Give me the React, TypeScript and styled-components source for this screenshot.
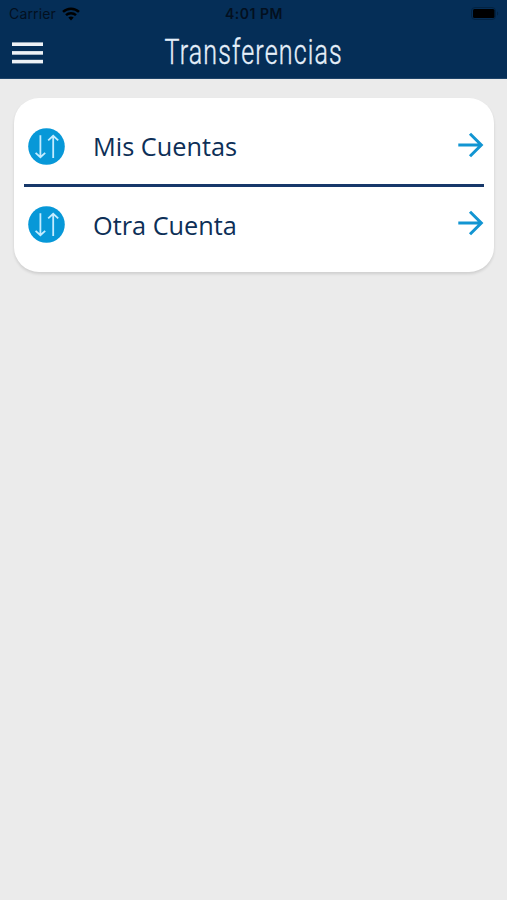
import React from "react";
import styled, { createGlobalStyle } from "styled-components";

const GlobalStyle = createGlobalStyle`
  * { box-sizing: border-box; }
  body { margin: 0; background: #ebebeb; }
`;

const Screen = styled.div`
  min-height: 900px;
  background: #ebebeb;
  font-family: "Open Sans", "Noto Sans", sans-serif;
`;

const Header = styled.header`
  height: 79px;
  background: #052e57;
  border-bottom: 1px solid #1f4469;
`;

const StatusBar = styled.div`
  height: 27px;
  padding: 0 8px 0 9px;
  display: grid;
  grid-template-columns: 1fr auto 1fr;
  align-items: center;
  color: #03101f;
  font: 400 14px/27px Inter, sans-serif;
`;

const Carrier = styled.div`
  display: flex;
  align-items: center;
  gap: 6px;
  letter-spacing: 0.15px;
`;

const Clock = styled.div`
  font-weight: 600;
  letter-spacing: 0.5px;
`;

const BatterySlot = styled.div`
  display: flex;
  justify-content: flex-end;
`;

const TitleBar = styled.div`
  height: 51px;
  display: grid;
  grid-template-columns: 43px 1fr 43px;
  align-items: center;
`;

const MenuButton = styled.button`
  border: 0;
  padding: 0 0 0 12px;
  background: none;
  display: flex;
`;

const Title = styled.h1`
  margin: 0;
  justify-self: center;
  color: #e6f0fa;
  font: 300 35px/51px Roboto, sans-serif;
  letter-spacing: 1.6px;
  white-space: nowrap;
  -webkit-text-stroke: 0.4px #e6f0fa;
  transform: scaleX(0.715);
`;

const Card = styled.main`
  margin: 19px 13px 0 14px;
  height: 174px;
  padding: 8px 10px 0;
  background: #fff;
  border-radius: 25px;
  box-shadow: 0 2px 3px rgba(0, 0, 0, 0.12);
`;

const Row = styled.div`
  height: 78px;
  padding: 2px 0 0 4px;
  display: flex;
  align-items: center;

  & + & {
    padding-top: 0;
    border-top: 3px solid #17386a;
  }
`;

const Label = styled.span`
  flex: 1;
  margin-left: 28px;
  color: #0d2f57;
  font-size: 25.3px;
  line-height: 34px;
  white-space: nowrap;
`;

const Arrow = styled.svg`
  margin-top: -3px;
`;

function MenuIcon() {
  return (
    <svg width="31" height="22" viewBox="0 0 31 22" fill="#eef2f6">
      <rect y="0.4" width="31" height="3.6" />
      <rect y="9.1" width="31" height="3.6" />
      <rect y="17.8" width="31" height="3.6" />
    </svg>
  );
}

function WifiIcon() {
  return (
    <svg width="18" height="14" viewBox="0 0 18 14" fill="none" stroke="#000" strokeWidth="2.5">
      <path d="M1 4.9C5.5.6 12.5.6 17 4.9" />
      <path d="M4 8.2c2.8-2.6 7.2-2.6 10 0" />
      <path d="M6.3 10.6c1.6-1.4 3.8-1.4 5.4 0L9 13.4z" fill="#000" stroke="none" />
    </svg>
  );
}

function BatteryIcon() {
  return (
    <svg width="28" height="13" viewBox="0 0 28 13">
      <rect x="0.5" y="0.5" width="24" height="12" rx="3.5" fill="none" stroke="#032342" />
      <rect x="2" y="2" width="21.5" height="9" rx="1.5" fill="#000" />
      <path d="M26 4.5v4c1.6-.7 1.6-3.3 0-4z" fill="#032342" />
    </svg>
  );
}

function TransferIcon() {
  return (
    <svg width="37" height="37" viewBox="0 0 37 37" fill="none">
      <circle cx="18.5" cy="18.5" r="18.3" fill="#0798d8" />
      <g stroke="#c4ecff" strokeWidth="1.8">
        <path d="M12.4 7.2v21.6M7.6 24.8l4.8 4.4 4.8-4.4" />
        <path d="M25.2 30V8.2M20.2 12.4l5-4.6 5 4.6" />
      </g>
    </svg>
  );
}

function ArrowIcon() {
  return (
    <Arrow width="26" height="26" viewBox="0 0 26 26" fill="none" stroke="#1295d2" strokeWidth="3">
      <path d="M.3 13h23M12 1.8L23.3 13 12 24.2" />
    </Arrow>
  );
}

const options = ["Mis Cuentas", "Otra Cuenta"];

export default function App() {
  return (
    <Screen>
      <GlobalStyle />
      <Header>
        <StatusBar>
          <Carrier>
            Carrier
            <WifiIcon />
          </Carrier>
          <Clock>4:01 PM</Clock>
          <BatterySlot>
            <BatteryIcon />
          </BatterySlot>
        </StatusBar>
        <TitleBar>
          <MenuButton aria-label="Menú">
            <MenuIcon />
          </MenuButton>
          <Title>Transferencias</Title>
        </TitleBar>
      </Header>
      <Card>
        {options.map((label) => (
          <Row key={label}>
            <TransferIcon />
            <Label>{label}</Label>
            <ArrowIcon />
          </Row>
        ))}
      </Card>
    </Screen>
  );
}
